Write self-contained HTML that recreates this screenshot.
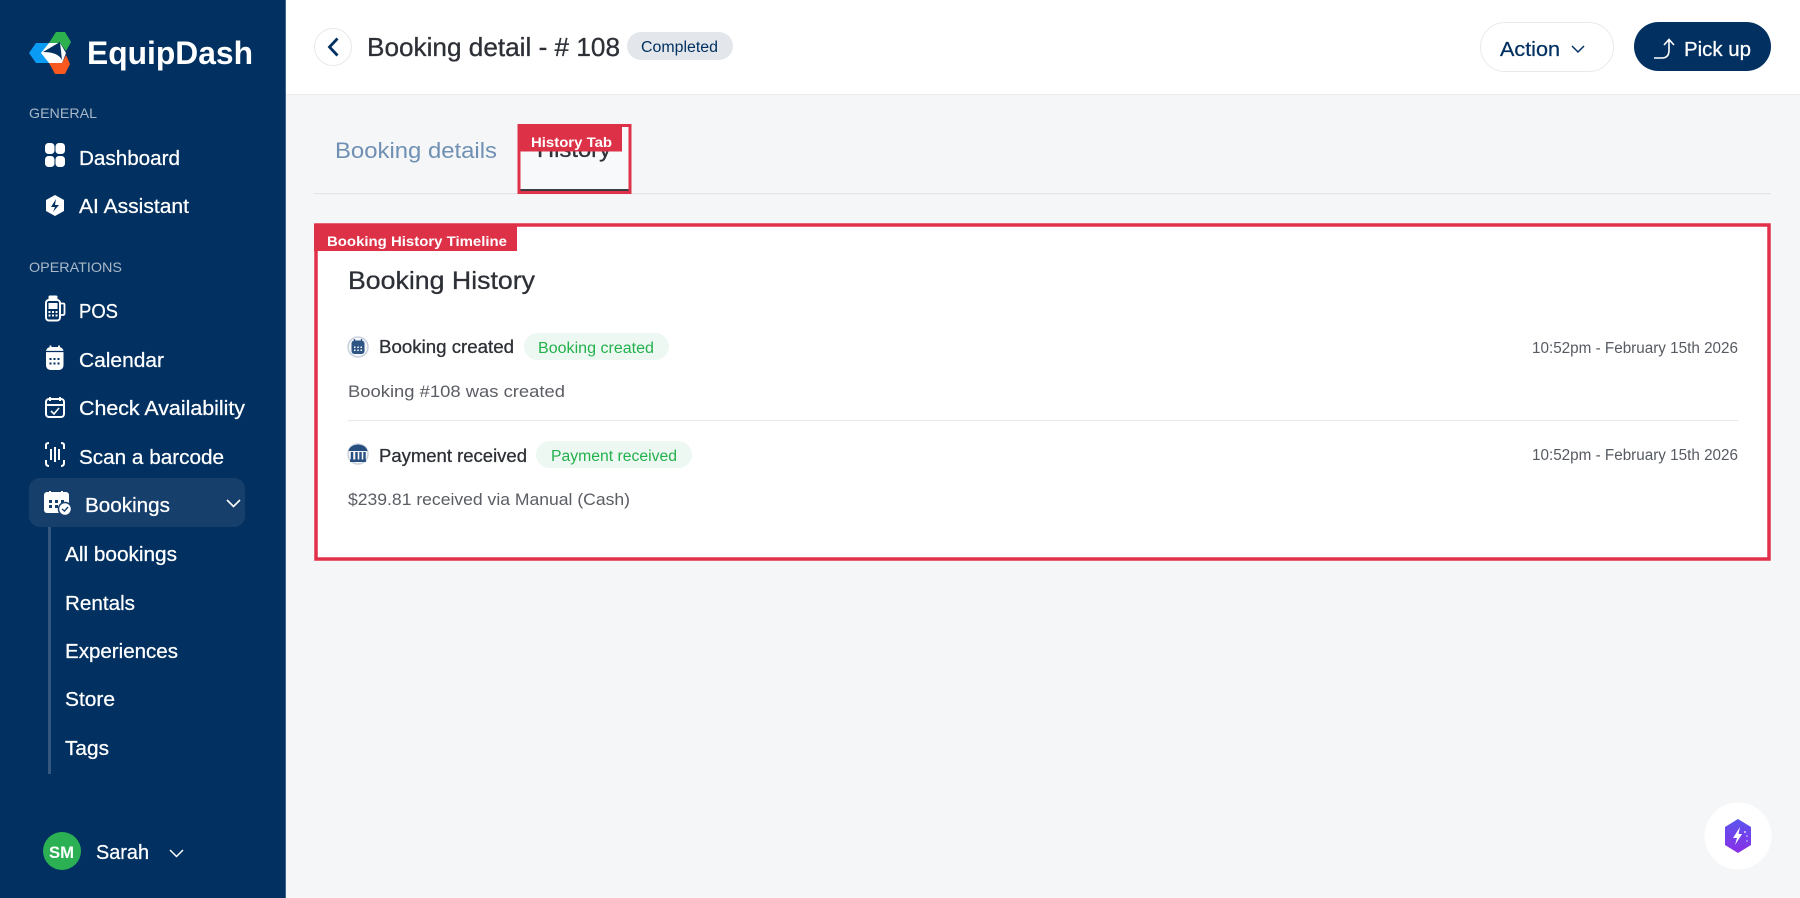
<!DOCTYPE html>
<html lang="en"><head><meta charset="utf-8"><title>Booking detail</title>
<style>
html,body{margin:0;padding:0;width:1800px;height:898px;overflow:hidden;background:#f5f6f8}
svg{display:block}
text{font-family:"Liberation Sans",Arial,sans-serif}
.n{fill:#fff;font-size:20px;stroke:#fff;stroke-width:.25px}
.s{fill:#aab8c8;font-size:14px}
.d{fill:#2d3036;stroke:#2d3036;stroke-width:.3px}
.g{fill:#5a5d63;font-size:17px}
.t{fill:#22b14c;font-size:15.5px}
.l{fill:#fff;font-size:14px;font-weight:bold}
</style></head><body>
<svg width="1800" height="898" viewBox="0 0 1800 898" xmlns="http://www.w3.org/2000/svg">
<rect width="1800" height="898" fill="#f5f6f8"/>
<!-- header -->
<rect x="285" width="1515" height="94" fill="#fff"/>
<rect x="285" y="94" width="1515" height="1" fill="#e9ebee"/>
<!-- sidebar -->
<rect width="285" height="898" fill="#023161"/>
<rect x="285" width="1" height="898" fill="#3f6491"/>
<!-- logo -->
<path d="M49 43 L56 32 H65 L71 42 L66 51 L60 43 Z" fill="#2db14f"/>
<path d="M29 53 L36 43 H50 L42 53 L49 63 H36 Z" fill="#0a9bf5"/>
<path d="M49 63 H62 L66 55 L70 64 L65 74 H55 Z" fill="#f9591f"/>
<path d="M41 53 L49 43 H60 L66 53 L62 63 H49 Z" fill="#fff"/>
<path d="M43 52 L60 42 L62 60 Q58 52 43 52 Z" fill="#023161"/>
<text x="87" y="64" font-size="32" font-weight="bold" fill="#fff" textLength="166" lengthAdjust="spacingAndGlyphs">EquipDash</text>
<text class="s" x="29" y="118" textLength="68" lengthAdjust="spacingAndGlyphs">GENERAL</text>
<text class="s" x="29" y="272" textLength="93" lengthAdjust="spacingAndGlyphs">OPERATIONS</text>
<!-- nav icons -->
<g fill="#fff">
<rect x="45" y="143" width="9.500" height="11" rx="3.500"/><rect x="55.500" y="143" width="9.500" height="11" rx="3.500"/>
<rect x="45" y="156" width="9.500" height="11" rx="3.500"/><rect x="55.500" y="156" width="9.500" height="11" rx="3.500"/>
<path d="M55 195 L64 200 V211 L55 216 L46 211 V200 Z"/>
</g>
<path d="M56 199 L51 207 H55 L53 212 L59 205 H55 Z" fill="#023161"/>
<!-- POS -->
<rect x="46" y="300" width="14" height="20.500" rx="3" fill="none" stroke="#fff" stroke-width="2"/>
<rect x="48.500" y="295.500" width="9" height="5" rx="1.500" fill="#fff"/>
<path d="M60 303.500 H63.500 Q64.500 303.500 64.500 305 V313 Q64.500 315 63 315 H60" fill="none" stroke="#fff" stroke-width="1.800"/>
<rect x="48.500" y="303" width="9" height="6" fill="#fff"/>
<g fill="#fff"><rect x="48.500" y="311" width="2" height="2"/><rect x="52" y="311" width="2" height="2"/><rect x="55.500" y="311" width="2" height="2"/><rect x="48.500" y="314.500" width="2" height="2"/><rect x="52" y="314.500" width="2" height="2"/><rect x="55.500" y="314.500" width="2" height="2"/></g>
<!-- Calendar -->
<rect x="46" y="347" width="17.500" height="23" rx="4.500" fill="#fff"/>
<path d="M46 351.500 H63.500" stroke="#023161" stroke-width="1.300"/>
<path d="M50.500 345.500 V350 M59 345.500 V350" stroke="#fff" stroke-width="1.800"/>
<g fill="#023161"><rect x="49.500" y="358" width="2" height="2"/><rect x="53.500" y="358" width="2" height="2"/><rect x="57.500" y="358" width="2" height="2"/><rect x="49.500" y="362.500" width="2" height="2"/><rect x="53.500" y="362.500" width="2" height="2"/><rect x="57.500" y="362.500" width="2" height="2"/></g>
<g fill="none" stroke="#fff" stroke-width="2">
<rect x="46" y="399" width="18" height="18" rx="3"/><path d="M46 405 H64 M50 397 V401 M60 397 V401"/><path d="M51 411 L54 414 L59 408" stroke-width="1.600"/>
<path d="M46 449 V445 Q46 443 49 443 M61 443 Q64 443 64 445 V449 M46 460 V463 Q46 466 49 466 M61 466 Q64 466 64 463 V460"/>
<path d="M51 449 V460 M55 447 V462 M59 449 V460"/>
</g>
<!-- bookings -->
<rect x="29" y="478" width="216" height="49" rx="11" fill="#173f6c"/>
<rect x="44" y="492" width="25" height="21" rx="3" fill="#fff"/>
<path d="M50 491 V495 M62 491 V495" stroke="#fff" stroke-width="2"/>
<g fill="#173f6c"><rect x="49" y="500" width="3" height="3"/><rect x="55" y="500" width="3" height="3"/><rect x="61" y="500" width="3" height="3"/><rect x="49" y="505" width="3" height="3"/><rect x="55" y="505" width="3" height="3"/></g>
<circle cx="65" cy="509" r="6.500" fill="#fff" stroke="#173f6c" stroke-width="1.500"/>
<path d="M62 509 L64.500 511 L68 507" fill="none" stroke="#173f6c" stroke-width="1.400"/>
<path d="M227 500 L233.500 506.500 L240 500" fill="none" stroke="#fff" stroke-width="1.600"/>
<rect x="48" y="527" width="3" height="247" fill="#33577f"/>
<text class="n" x="79" y="165" textLength="101" lengthAdjust="spacingAndGlyphs">Dashboard</text>
<text class="n" x="79" y="213" textLength="110" lengthAdjust="spacingAndGlyphs">AI Assistant</text>
<text class="n" x="79" y="318" textLength="39" lengthAdjust="spacingAndGlyphs">POS</text>
<text class="n" x="79" y="367" textLength="85" lengthAdjust="spacingAndGlyphs">Calendar</text>
<text class="n" x="79" y="415" textLength="166" lengthAdjust="spacingAndGlyphs">Check Availability</text>
<text class="n" x="79" y="464" textLength="145" lengthAdjust="spacingAndGlyphs">Scan a barcode</text>
<text class="n" x="85" y="512" textLength="85" lengthAdjust="spacingAndGlyphs">Bookings</text>
<text class="n" x="65" y="561" textLength="112" lengthAdjust="spacingAndGlyphs">All bookings</text>
<text class="n" x="65" y="610" textLength="70" lengthAdjust="spacingAndGlyphs">Rentals</text>
<text class="n" x="65" y="658" textLength="113" lengthAdjust="spacingAndGlyphs">Experiences</text>
<text class="n" x="65" y="706" textLength="50" lengthAdjust="spacingAndGlyphs">Store</text>
<text class="n" x="65" y="755" textLength="44" lengthAdjust="spacingAndGlyphs">Tags</text>
<circle cx="62" cy="851" r="19" fill="#2bb153"/>
<text x="49" y="858" font-size="17" font-weight="bold" fill="#fff" textLength="25" lengthAdjust="spacingAndGlyphs">SM</text>
<text class="n" x="96" y="859" textLength="53" lengthAdjust="spacingAndGlyphs">Sarah</text>
<path d="M170 850 L176.500 856.500 L183 850" fill="none" stroke="#fff" stroke-width="1.500"/>
<!-- page header -->
<circle cx="333" cy="47" r="18.500" fill="#fff" stroke="#e6e8eb"/>
<path d="M337.500 38.500 L329.500 47 L337.500 55.500" fill="none" stroke="#023161" stroke-width="2.800"/>
<text class="d" x="367" y="56" font-size="26" textLength="253" lengthAdjust="spacingAndGlyphs">Booking detail - # 108</text>
<rect x="627" y="32" width="106" height="28" rx="14" fill="#e3e7ec"/>
<text x="641" y="52" font-size="15.500" fill="#023161" textLength="77" lengthAdjust="spacingAndGlyphs">Completed</text>
<rect x="1480.500" y="22.500" width="133" height="49" rx="24.500" fill="#fff" stroke="#e8eaed"/>
<text x="1500" y="56" font-size="20" fill="#023161" stroke="#023161" stroke-width=".25" textLength="60" lengthAdjust="spacingAndGlyphs">Action</text>
<path d="M1572 46 L1578 52 L1584 46" fill="none" stroke="#023161" stroke-width="1.500"/>
<rect x="1634" y="22" width="137" height="49" rx="24.500" fill="#023161"/>
<path d="M1654 58 H1662 Q1669 58 1669 50 V40 M1664 45 L1669 39.500 L1674 45" fill="none" stroke="#fff" stroke-width="1.600"/>
<text class="n" x="1684" y="56" textLength="67" lengthAdjust="spacingAndGlyphs">Pick up</text>
<!-- tabs -->
<text x="335" y="158" font-size="22" fill="#6f90b3" textLength="162" lengthAdjust="spacingAndGlyphs">Booking details</text>
<rect x="314" y="193" width="1457" height="1.200" fill="#e3e5e8"/>
<rect x="519" y="126" width="111" height="66.500" fill="#f8f9fb"/>
<text class="d" x="537" y="157" font-size="22" textLength="74" lengthAdjust="spacingAndGlyphs">History</text>
<rect x="520" y="189" width="109" height="2" fill="#3a3d42"/>
<rect x="519" y="125.500" width="111" height="67" fill="none" stroke="#e0314a" stroke-width="3"/>
<rect x="517.500" y="124" width="104.500" height="27.500" fill="#dd3147"/>
<text class="l" x="531" y="147" textLength="81" lengthAdjust="spacingAndGlyphs">History Tab</text>
<!-- timeline -->
<rect x="316" y="225" width="1453" height="334" fill="#fff" stroke="#e3304a" stroke-width="3.500"/>
<rect x="314" y="224" width="203" height="27" fill="#dd3147"/>
<text class="l" x="327" y="246" textLength="180" lengthAdjust="spacingAndGlyphs">Booking History Timeline</text>
<text class="d" x="348" y="289" font-size="25" textLength="187" lengthAdjust="spacingAndGlyphs">Booking History</text>
<!-- row 1 -->
<circle cx="358" cy="347" r="10" fill="#f4f6f9" stroke="#c9d2de" stroke-width="1.500"/>
<rect x="351.500" y="340.500" width="13" height="13.500" rx="3" fill="#2f5585"/>
<path d="M354.500 339 V342 M361.500 339 V342" stroke="#2f5585" stroke-width="1.300"/>
<g fill="#fff"><rect x="354" y="346.500" width="1.500" height="1.500"/><rect x="357.300" y="346.500" width="1.500" height="1.500"/><rect x="360.500" y="346.500" width="1.500" height="1.500"/><rect x="354" y="349.500" width="1.500" height="1.500"/><rect x="357.300" y="349.500" width="1.500" height="1.500"/><rect x="360.500" y="349.500" width="1.500" height="1.500"/></g>
<text class="d" x="379" y="353" font-size="18" textLength="135" lengthAdjust="spacingAndGlyphs">Booking created</text>
<rect x="524" y="333" width="145" height="27" rx="13.500" fill="#eef8f2"/>
<text class="t" x="538" y="353" textLength="116" lengthAdjust="spacingAndGlyphs">Booking created</text>
<text x="1532" y="353" font-size="15.500" fill="#565a62" textLength="206" lengthAdjust="spacingAndGlyphs">10:52pm - February 15th 2026</text>
<text class="g" x="348" y="397" textLength="217" lengthAdjust="spacingAndGlyphs">Booking #108 was created</text>
<rect x="348" y="420" width="1390" height="1" fill="#e6e8eb"/>
<!-- row 2 -->
<circle cx="358" cy="454" r="10" fill="#f4f6f9" stroke="#c9d2de" stroke-width="1.500"/>
<path d="M348.500 451 Q350 445 358 444.500 Q366 445 367.500 451 Z" fill="#264f80"/>
<path d="M352 452 V460 M356.500 452 V460 M360.500 452 V460 M364.500 452 V460" stroke="#264f80" stroke-width="2.400" fill="none"/>
<rect x="350" y="459.500" width="16" height="2.500" fill="#264f80"/>
<text class="d" x="379" y="462" font-size="18" textLength="148" lengthAdjust="spacingAndGlyphs">Payment received</text>
<rect x="536" y="441" width="156" height="27" rx="13.500" fill="#eef8f2"/>
<text class="t" x="551" y="461" textLength="126" lengthAdjust="spacingAndGlyphs">Payment received</text>
<text x="1532" y="460" font-size="15.500" fill="#565a62" textLength="206" lengthAdjust="spacingAndGlyphs">10:52pm - February 15th 2026</text>
<text class="g" x="348" y="505" textLength="282" lengthAdjust="spacingAndGlyphs">$239.81 received via Manual (Cash)</text>
<!-- fab -->
<defs><linearGradient id="h" x1="0" y1="0" x2="0" y2="1"><stop offset="0" stop-color="#5a55ee"/><stop offset="1" stop-color="#8a2fe6"/></linearGradient></defs>
<circle cx="1738" cy="836" r="33.500" fill="#fff"/>
<path d="M1738 819 L1751 827 V845 L1738 853 L1725 845 V827 Z" fill="url(#h)"/>
<path d="M1740 827 L1733 838 H1737 L1735 845 L1742 834 H1738.500 Z" fill="#fff"/>
<g fill="#ddd0fb"><circle cx="1745" cy="832" r="1"/><circle cx="1747" cy="836" r=".8"/><circle cx="1747" cy="841" r=".8"/></g>
</svg>
</body></html>
